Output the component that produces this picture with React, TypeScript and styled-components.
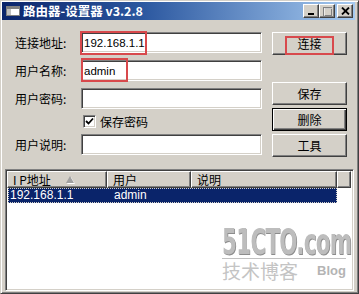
import styled, { createGlobalStyle } from 'styled-components';

const Global = createGlobalStyle`
  html, body { margin: 0; padding: 0; }
  body {
    background: #d4d0c8;
    font-family: "Noto Sans CJK SC", "Liberation Sans", sans-serif;
    font-size: 12px;
    color: #000;
  }
`;

const Window = styled.div`
  width: 359px;
  height: 294px;
  box-sizing: border-box;
  background: #d4d0c8;
  border: 1px solid;
  border-color: #d4d0c8 #404040 #404040 #d4d0c8;
  box-shadow: inset 1px 1px #fff, inset -1px -1px #808080;
  padding: 1px 3px 3px 1px;
  display: flex;
  flex-direction: column;
  overflow: hidden;
`;

const TitleBar = styled.div`
  height: 18px;
  flex: none;
  display: flex;
  align-items: center;
  padding-left: 4px;
  background: linear-gradient(90deg, #0a246a 0%, #2c58a0 40%, #a6caf0 100%);
`;

const Title = styled.span`
  margin-left: 3px;
  color: #fff;
  font-weight: bold;
  font-size: 12.5px;
  line-height: 14px;
  font-family: "Noto Sans CJK SC", "Liberation Sans", sans-serif;
`;

const TitleButtons = styled.div`
  margin-left: auto;
  margin-right: 2px;
  display: flex;
`;

const CapButton = styled.div<{ $gap?: boolean }>`
  width: 16px;
  height: 14px;
  box-sizing: border-box;
  margin-left: ${p => (p.$gap ? '2px' : '0')};
  background: #d4d0c8;
  border: 1px solid;
  border-color: #fff #404040 #404040 #fff;
  box-shadow: inset -1px -1px #808080;
  display: flex;
  align-items: center;
  justify-content: center;
`;

const Body = styled.div`
  flex: none;
  display: flex;
  flex-direction: column;
  padding-top: 12px;
`;

const Form = styled.div`
  display: flex;
  padding-left: 13px;
`;

const Fields = styled.div`
  width: 247px;
  display: flex;
  flex-direction: column;
  gap: 7px;
`;

const Row = styled.div`
  display: flex;
  align-items: center;
  height: 21px;
  position: relative;
`;

const Label = styled.label`
  width: 66px;
  flex: none;
  font-size: 12px;
  line-height: 14px;
`;

const Input = styled.div`
  flex: 1;
  height: 21px;
  box-sizing: border-box;
  background: #fff;
  border: 1px solid;
  border-color: #808080 #fff #fff #808080;
  box-shadow: inset 1px 1px #404040, inset -1px -1px #d4d0c8;
  padding: 0 2px;
  display: flex;
  align-items: center;
  font-family: "Liberation Sans", Arial, sans-serif;
  font-size: 11.5px;
`;

const Mark = styled.div<{ $w: number; $l: number; $t: number; $h: number }>`
  position: absolute;
  left: ${p => p.$l}px;
  top: ${p => p.$t}px;
  width: ${p => p.$w}px;
  height: ${p => p.$h}px;
  box-sizing: border-box;
  border: 2px solid #d8494c;
  pointer-events: none;
`;

const CheckRow = styled.div`
  height: 11px;
  display: flex;
  align-items: center;
  padding-left: 68px;
  gap: 4px;
  font-size: 12px;
`;

const Check = styled.span`
  width: 13px;
  height: 13px;
  box-sizing: border-box;
  background: #fff;
  border: 1px solid;
  border-color: #808080 #fff #fff #808080;
  box-shadow: inset 1px 1px #404040, inset -1px -1px #d4d0c8;
  display: flex;
  align-items: center;
  justify-content: center;
`;

const Buttons = styled.div`
  margin-left: 10px;
  width: 75px;
  display: flex;
  flex-direction: column;
  gap: 3px;
`;

const Button = styled.div<{ $default?: boolean; $push?: number }>`
  position: relative;
  height: 23px;
  box-sizing: border-box;
  margin-top: ${p => p.$push ?? 0}px;
  background: #d4d0c8;
  border: 1px solid;
  border-color: ${p => (p.$default ? '#000' : '#fff #404040 #404040 #fff')};
  box-shadow: ${p =>
    p.$default
      ? 'inset 1px 1px #fff, inset -1px -1px #404040, inset -2px -2px #808080'
      : 'inset -1px -1px #808080'};
  display: flex;
  align-items: center;
  justify-content: center;
  font-size: 12px;
`;

const List = styled.div`
  position: relative;
  margin: 12px 1px 0 3px;
  height: 122px;
  flex: none;
  box-sizing: border-box;
  background: #fff;
  border: 1px solid;
  border-color: #808080 #fff #fff #808080;
  box-shadow: inset 1px 1px #404040, inset -1px -1px #d4d0c8;
  padding: 1px 2px 2px 1px;
  overflow: hidden;
`;

const Header = styled.div`
  display: flex;
  height: 17px;
`;

const HeadCell = styled.div<{ $w?: number }>`
  ${p => (p.$w ? `width: ${p.$w}px; flex: none;` : 'flex: 1;')}
  box-sizing: border-box;
  background: #d4d0c8;
  border: 1px solid;
  border-color: #fff #404040 #404040 #fff;
  box-shadow: inset -1px -1px #808080;
  padding-left: 5px;
  display: flex;
  align-items: center;
  font-size: 12px;
  line-height: 14px;
`;

const SortArrow = styled.span`
  margin-left: 15px;
  width: 0;
  height: 0;
  border-left: 4px solid transparent;
  border-right: 4px solid transparent;
  border-bottom: 7px solid #a0a0a0;
  filter: drop-shadow(1px 1px 0 #fff);
`;

const DataRow = styled.div<{ $selected?: boolean }>`
  display: flex;
  width: 329px;
  margin-left: 1px;
  height: 15px;
  box-sizing: border-box;
  background: ${p => (p.$selected ? '#0a246a' : 'transparent')};
  color: ${p => (p.$selected ? '#fff' : '#000')};
  outline: ${p => (p.$selected ? '1px dotted #d4d0c8' : 'none')};
  outline-offset: -1px;
  font-family: "Liberation Sans", Arial, sans-serif;
  font-size: 12px;
  line-height: 15px;
`;

const Cell = styled.span<{ $w: number }>`
  width: ${p => p.$w}px;
  padding-left: 2px;
  box-sizing: border-box;
`;

const Watermark = styled.div`
  position: absolute;
  left: 216px;
  top: 57px;
  width: 124px;
  color: #bdbdbd;
  font-family: "DejaVu Sans Condensed", "DejaVu Sans", sans-serif;
  font-weight: bold;
  pointer-events: none;
`;

const Brand = styled.div`
  height: 30px;
  font-size: 36px;
  line-height: 30px;
  letter-spacing: -1px;
  transform: scaleX(0.66);
  transform-origin: left center;
  white-space: nowrap;
  text-shadow: 1px 1px 0 #8c8c8c;
`;

const Rule = styled.div`
  height: 1px;
  margin-top: 1px;
  background: #c0c0c0;
`;

const Sub = styled.div`
  display: flex;
  align-items: flex-start;
  justify-content: space-between;
  margin-top: 1px;
`;

const SubCn = styled.span`
  font-family: "Noto Sans CJK SC", sans-serif;
  font-weight: normal;
  font-size: 19px;
  line-height: 22px;
  color: #c4c4c4;
`;

const SubEn = styled.span`
  font-family: "Liberation Sans", Arial, sans-serif;
  font-weight: bold;
  font-size: 13px;
  line-height: 15px;
  margin-top: 3px;
  color: #b4b4b4;
`;

export default function App() {
  return (
    <>
      <Global />
      <Window>
        <TitleBar>
          <svg width="14" height="10" viewBox="0 0 14 10">
            <rect x="0.5" y="0.5" width="13" height="9" fill="#fff" stroke="#808080" />
            <rect x="1" y="1" width="12" height="2" fill="#808080" />
            <rect x="1" y="3" width="4" height="6" fill="#c0c0c0" />
          </svg>
          <Title>路由器-设置器 v3.2.8</Title>
          <TitleButtons>
            <CapButton>
              <svg width="8" height="8" viewBox="0 0 8 8">
                <rect x="1" y="6" width="6" height="2" fill="#000" />
              </svg>
            </CapButton>
            <CapButton>
              <svg width="10" height="9" viewBox="0 0 10 9">
                <rect x="1.5" y="0.5" width="8" height="8" fill="none" stroke="#808080" />
                <rect x="1" y="1" width="9" height="1" fill="#808080" />
                <rect x="2.5" y="1.5" width="8" height="8" fill="none" stroke="#fff" strokeWidth="0.6" />
              </svg>
            </CapButton>
            <CapButton $gap>
              <svg width="9" height="8" viewBox="0 0 9 8">
                <path d="M1 0.5 L8 7.5 M8 0.5 L1 7.5" stroke="#000" strokeWidth="1.8" />
              </svg>
            </CapButton>
          </TitleButtons>
        </TitleBar>
        <Body>
          <Form>
            <Fields>
              <Row>
                <Label>连接地址:</Label>
                <Input>192.168.1.1</Input>
                <Mark $l={65} $t={-1} $w={67} $h={24} />
              </Row>
              <Row>
                <Label>用户名称:</Label>
                <Input>admin</Input>
                <Mark $l={66} $t={-2} $w={47} $h={24} />
              </Row>
              <Row>
                <Label>用户密码:</Label>
                <Input />
              </Row>
              <CheckRow>
                <Check>
                  <svg width="9" height="9" viewBox="0 0 9 9">
                    <path d="M1 4 L3.5 6.5 L8 1.5" stroke="#000" strokeWidth="1.8" fill="none" />
                  </svg>
                </Check>
                保存密码
              </CheckRow>
              <Row>
                <Label>用户说明:</Label>
                <Input />
              </Row>
            </Fields>
            <Buttons>
              <Button>
                连接
                <Mark $l={12} $t={3} $w={49} $h={19} />
              </Button>
              <Button $push={24}>保存</Button>
              <Button $default>删除</Button>
              <Button>工具</Button>
            </Buttons>
          </Form>
          <List>
            <Header>
              <HeadCell $w={100}>
                I P地址
                <SortArrow />
              </HeadCell>
              <HeadCell $w={84}>用户</HeadCell>
              <HeadCell $w={146}>说明</HeadCell>
              <HeadCell />
            </Header>
            <DataRow $selected>
              <Cell $w={104}>192.168.1.1</Cell>
              <Cell $w={84}>admin</Cell>
              <Cell $w={141}></Cell>
            </DataRow>
            <Watermark>
              <Brand>51CTO.com</Brand>
              <Rule />
              <Sub>
                <SubCn>技术博客</SubCn>
                <SubEn>Blog</SubEn>
              </Sub>
            </Watermark>
          </List>
        </Body>
      </Window>
    </>
  );
}
